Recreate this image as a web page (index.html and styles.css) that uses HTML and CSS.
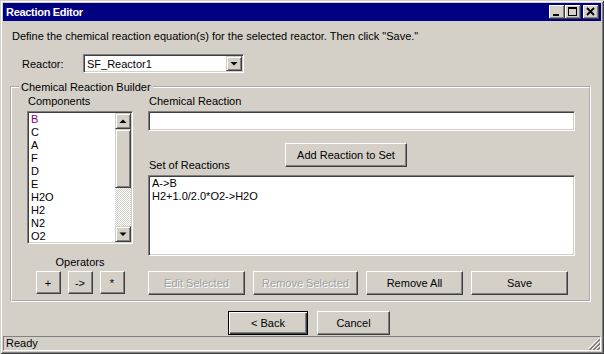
FILE: index.html
```html
<!DOCTYPE html>
<html>
<head>
<meta charset="utf-8">
<title>Reaction Editor</title>
<link rel="stylesheet" href="styles.css">
</head>
<body>
<div class="window">
  <div class="titlebar">
    <span class="title">Reaction Editor</span>
    <div class="caption-buttons">
      <span class="cbtn"><svg width="16" height="14" viewBox="0 0 16 14"><rect x="4" y="9" width="6" height="2" fill="#000"/></svg></span>
      <span class="cbtn"><svg width="16" height="14" viewBox="0 0 16 14"><rect x="3" y="2" width="9" height="2" fill="#000"/><rect x="3.5" y="2.5" width="8" height="8" fill="none" stroke="#000"/></svg></span>
      <span class="cbtn close"><svg width="16" height="14" viewBox="0 0 16 14"><path d="M4 3 L11 10 M11 3 L4 10" stroke="#000" stroke-width="1.8"/></svg></span>
    </div>
  </div>

  <div class="client">
    <p class="intro">Define the chemical reaction equation(s) for the selected reactor. Then click "Save."</p>

    <div class="reactor-row">
      <span class="reactor-label">Reactor:</span>
      <div class="combo sunken">
        <span class="combo-text">SF_Reactor1</span>
        <span class="combo-btn raised"><svg width="14" height="13" viewBox="0 0 14 13"><polygon points="3.5,5 10.5,5 7,8.5" fill="#000"/></svg></span>
      </div>
    </div>

    <fieldset class="group">
      <legend>Chemical Reaction Builder</legend>
      <div class="group-body">
        <div class="left-col">
          <span class="field-label">Components</span>
          <div class="listbox sunken">
            <div class="list-items">
              <div class="item item-first">B</div>
              <div class="item">C</div>
              <div class="item">A</div>
              <div class="item">F</div>
              <div class="item">D</div>
              <div class="item">E</div>
              <div class="item">H2O</div>
              <div class="item">H2</div>
              <div class="item">N2</div>
              <div class="item">O2</div>
            </div>
            <div class="scrollbar">
              <span class="sb-btn raised"><svg width="14" height="14" viewBox="0 0 14 14"><polygon points="3.5,9 10.5,9 7,5.5" fill="#000"/></svg></span>
              <span class="sb-thumb raised"></span>
              <span class="sb-track"></span>
              <span class="sb-btn raised"><svg width="14" height="14" viewBox="0 0 14 14"><polygon points="3.5,5.5 10.5,5.5 7,9" fill="#000"/></svg></span>
            </div>
          </div>
          <span class="ops-label">Operators</span>
          <div class="ops">
            <button class="btn op">+</button>
            <button class="btn op">-&gt;</button>
            <button class="btn op">*</button>
          </div>
        </div>

        <div class="right-col">
          <span class="field-label">Chemical Reaction</span>
          <div class="textbox sunken"></div>
          <div class="add-row">
            <span class="field-label set-label">Set of Reactions</span>
            <button class="btn btn-add">Add Reaction to Set</button>
          </div>
          <div class="reactions sunken">
            <div class="item">A-&gt;B</div>
            <div class="item">H2+1.0/2.0*O2-&gt;H2O</div>
          </div>
          <div class="action-row">
            <button class="btn w97 disabled">Edit Selected</button>
            <button class="btn w105 disabled">Remove Selected</button>
            <button class="btn w97">Remove All</button>
            <button class="btn w97">Save</button>
          </div>
        </div>
      </div>
    </fieldset>

    <div class="nav-row">
      <button class="btn btn-default btn-back">&lt; Back</button>
      <button class="btn btn-cancel">Cancel</button>
    </div>
  </div>

  <div class="statusbar">
    <span class="status-text">Ready</span>
    <svg class="grip" width="12" height="12" viewBox="0 0 12 12">
      <path d="M11 0 L0 11 M11 4 L4 11 M11 8 L8 11" stroke="#fff" stroke-width="1"/>
      <path d="M12 1 L1 12 M12 2 L2 12 M12 5 L5 12 M12 6 L6 12 M12 9 L9 12 M12 10 L10 12" stroke="#808080" stroke-width="1"/>
    </svg>
  </div>
</div>
</body>
</html>
```

FILE: styles.css
```css
* {
  box-sizing: border-box;
}

html,
body {
  margin: 0;
  padding: 0;
}

body {
  width: 604px;
  height: 354px;
  overflow: hidden;
  background: #d4d0c8;
  font: 11px/14px "Liberation Sans", Arial, sans-serif;
  color: #000;
}

.window {
  width: 604px;
  height: 354px;
  display: flex;
  flex-direction: column;
  padding: 3px;
  background: #d4d0c8;
  box-shadow: inset 1px 1px #d4d0c8, inset -1px -1px #404040, inset 2px 2px #fff, inset -2px -2px #808080;
}

/* title bar */
.titlebar {
  flex: none;
  height: 18px;
  background: #000080;
  display: flex;
  align-items: center;
  padding: 0 2px 0 3px;
}

.title {
  flex: 1;
  color: #fff;
  font-weight: bold;
  letter-spacing: -0.3px;
}

.caption-buttons {
  display: flex;
}

.cbtn {
  display: block;
  width: 16px;
  height: 14px;
  background: #d4d0c8;
  box-shadow: inset -1px -1px #404040, inset 1px 1px #fff, inset -2px -2px #808080;
}

.cbtn svg {
  display: block;
}

.cbtn.close {
  margin-left: 2px;
}

/* common 3D */
.sunken {
  background: #fff;
  border: 1px solid;
  border-color: #808080 #fff #fff #808080;
  box-shadow: inset 1px 1px #404040, inset -1px -1px #d4d0c8;
}

.raised {
  display: flex;
  align-items: center;
  justify-content: center;
  background: #d4d0c8;
  border: 1px solid;
  border-color: #d4d0c8 #404040 #404040 #d4d0c8;
  box-shadow: inset 1px 1px #fff, inset -1px -1px #808080;
}

.raised svg {
  display: block;
}

.btn {
  appearance: none;
  margin: 0;
  padding: 0;
  font: inherit;
  color: #000;
  background: #d4d0c8;
  border: 1px solid;
  border-color: #fff #404040 #404040 #fff;
  box-shadow: inset -1px -1px #808080;
  display: flex;
  align-items: center;
  justify-content: center;
  white-space: nowrap;
}

.btn.disabled {
  color: #a0a0a0;
  text-shadow: 1px 1px 0 #fff;
}

.btn-default {
  border: 1px solid #000;
  box-shadow: inset 1px 1px #fff, inset -1px -1px #404040, inset -2px -2px #808080;
}

/* client */
.client {
  flex: 1;
  display: flex;
  flex-direction: column;
  padding: 0 10px 0 7px;
}

.intro {
  margin: 8px 0 0;
  padding-left: 2px;
}

.reactor-row {
  display: flex;
  align-items: center;
  margin-top: 11px;
  padding-left: 12px;
  height: 19px;
}

.reactor-label {
  width: 61px;
}

.combo {
  width: 161px;
  height: 19px;
  display: flex;
  align-items: center;
  padding: 1px 1px 1px 3px;
}

.combo-text {
  flex: 1;
}

.combo-btn {
  width: 16px;
  height: 15px;
}

/* group box */
.group {
  margin: 7px 0 0;
  padding: 0;
  min-width: 0;
  border: 2px groove #fff;
}

.group legend {
  margin-left: 7px;
  padding: 0 2px;
  line-height: 14px;
}

.group-body {
  display: flex;
  gap: 15px;
  padding: 0 14px 5px 15px;
}

.left-col {
  width: 106px;
  display: flex;
  flex-direction: column;
}

.right-col {
  width: 427px;
  display: flex;
  flex-direction: column;
}

.field-label {
  padding-left: 1px;
  line-height: 14px;
}

.listbox {
  margin-top: 3px;
  height: 133px;
  display: flex;
  padding: 1px;
}

.list-items {
  flex: 1;
  padding-left: 2px;
  overflow: hidden;
}

.item {
  line-height: 13px;
  white-space: nowrap;
}

.item-first {
  color: #800080;
}

.scrollbar {
  width: 16px;
  display: flex;
  flex-direction: column;
}

.sb-btn {
  height: 16px;
  flex: none;
}

.sb-thumb {
  height: 59px;
  flex: none;
}

.sb-track {
  flex: 1;
  background: repeating-conic-gradient(#d4d0c8 0 25%, #fff 0 50%) 0 0 / 2px 2px;
}

.ops-label {
  margin-top: 11px;
  text-align: center;
  line-height: 14px;
}

.ops {
  display: flex;
  justify-content: center;
  gap: 7px;
  margin-top: 2px;
}

.op {
  width: 25px;
  height: 23px;
}

.textbox {
  margin-top: 3px;
  height: 20px;
}

.add-row {
  display: flex;
  align-items: flex-start;
  margin-top: 12px;
  height: 29px;
}

.set-label {
  width: 137px;
  align-self: flex-end;
}

.btn-add {
  width: 122px;
  height: 24px;
}

.reactions {
  margin-top: 3px;
  height: 81px;
  padding: 1px 3px;
}

.action-row {
  display: flex;
  gap: 8px;
  margin-top: 15px;
}

.action-row .btn {
  height: 24px;
}

.w97 {
  width: 97px;
}

.w105 {
  width: 105px;
}

/* navigation */
.nav-row {
  display: flex;
  gap: 9px;
  margin-top: 9px;
  padding-left: 218px;
}

.btn-back {
  width: 80px;
  height: 24px;
}

.btn-cancel {
  width: 73px;
  height: 24px;
}

/* status bar */
.statusbar {
  flex: none;
  position: relative;
  height: 15px;
  border: 1px solid;
  border-color: #808080 #fff #fff #808080;
  padding-left: 2px;
  line-height: 13px;
}

.grip {
  position: absolute;
  right: 0;
  bottom: 0;
  display: block;
}
```
